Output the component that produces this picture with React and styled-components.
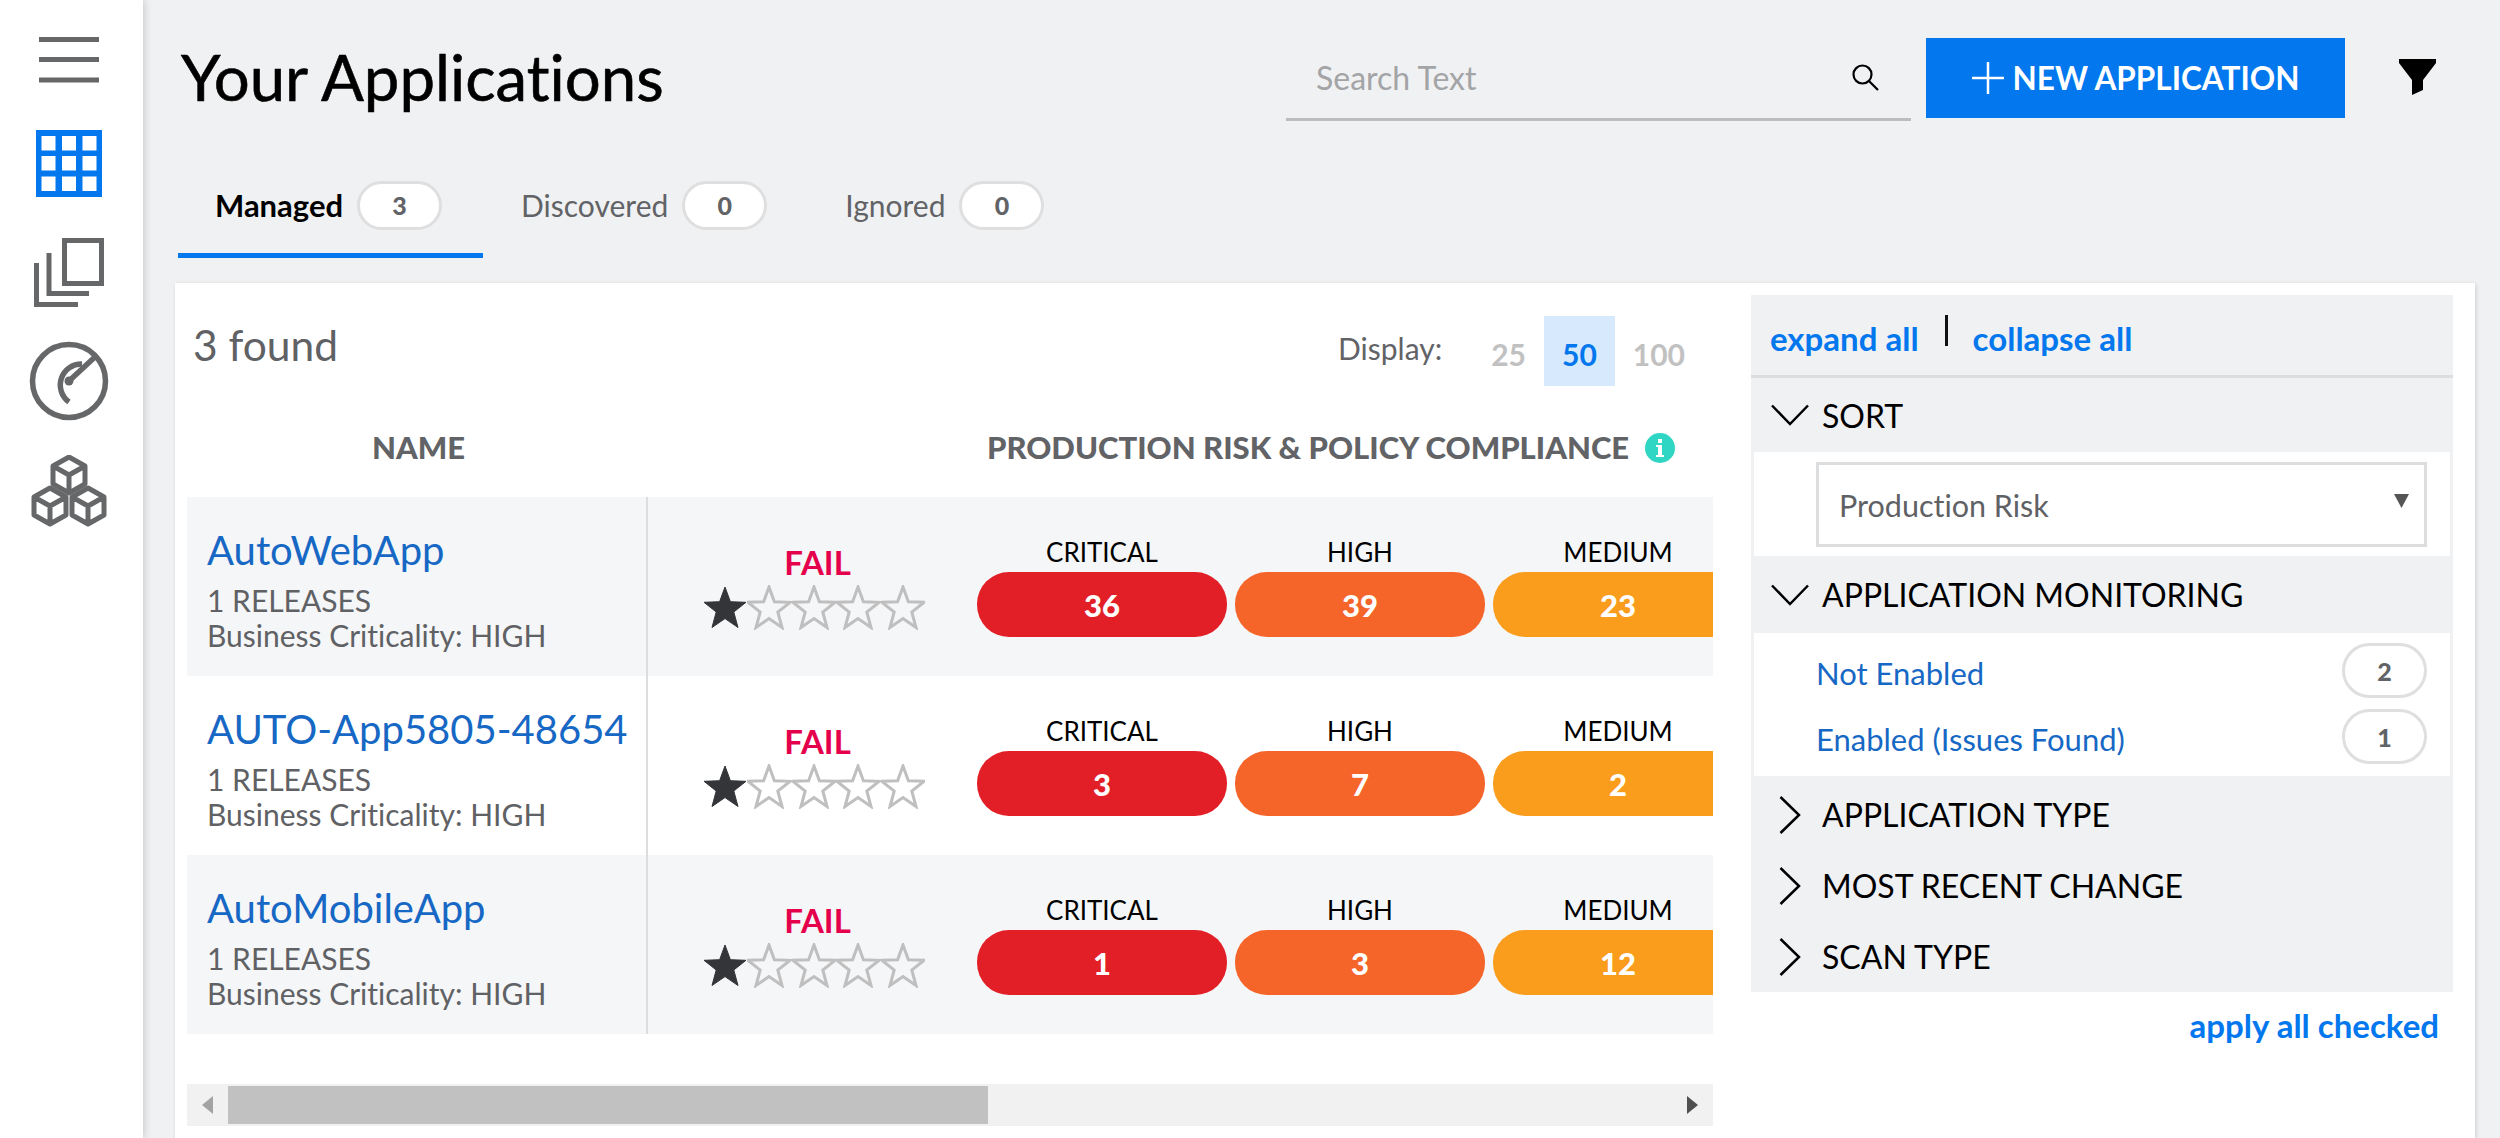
import React from 'react';
import styled, { createGlobalStyle } from 'styled-components';

const Global = createGlobalStyle`
  html, body { margin: 0; padding: 0; height: 1138px; overflow: hidden; background: #f0f1f3; }
  body { font-family: Lato, "Noto Sans", sans-serif; color: #000; font-variant-ligatures: none; }
  * { box-sizing: border-box; }
`;

const Page = styled.div`display: flex; width: 2500px; height: 1138px; overflow: hidden;`;
const Sidebar = styled.nav`
  width: 143px; flex: none; background: #fff; display: flex; flex-direction: column; align-items: center;
  padding: 37px 6px 0 0; box-shadow: 0 0 9px rgba(0,0,0,.22); position: relative; z-index: 1;
`;
const NavIcon = styled.svg`display: block; flex: none; margin-top: ${p => p.$top || 0}px;`;
const Main = styled.main`flex: 1; min-width: 0; display: flex; flex-direction: column; padding-left: 32px; padding-top: 38px;`;

const Header = styled.header`display: flex; align-items: flex-start; height: 80px; padding-left: 6px;`;
const Title = styled.h1`margin: 0; width: 1105px; flex: none; font-size: 63.5px; line-height: 78px; font-weight: 400; color: #000; -webkit-text-stroke: 0.6px #000;`;
const Search = styled.div`
  width: 625px; height: 83px; flex: none; border-bottom: 3px solid #bdbdbf; display: flex; align-items: center;
  justify-content: space-between; padding: 0 32px 2px 30px; font-size: 32px; color: #a3a4a6;
`;
const NewButton = styled.button`
  width: 419px; height: 80px; flex: none; margin-left: 15px; border: 0; background: #0277ee; color: #fff;
  display: flex; align-items: center; justify-content: center; gap: 9px; font: 700 31.5px Lato, sans-serif; padding: 0;
`;
const FilterIcon = styled.svg`display: block; flex: none; margin: 21px 0 0 54px;`;

const Tabs = styled.div`display: flex; height: 165px; margin-left: 3px; padding-top: 47px;`;
const Tab = styled.div`
  height: 93px; display: flex; align-items: center; gap: 14px;
  padding: 0 ${p => p.$active ? 41 : 40}px 8px ${p => p.$active ? 37 : 38}px;
  border-bottom: 5px solid ${p => p.$active ? '#0277ee' : 'transparent'};
  font-size: ${p => p.$active ? 31 : 30}px; font-weight: ${p => p.$active ? 700 : 400}; color: ${p => p.$active ? '#000' : '#626366'};
`;
const Count = styled.span`
  width: 85px; height: ${p => p.$h || 49}px; flex: none; border: 3px solid #dfdfe0; border-radius: 28px; background: #fff;
  display: flex; align-items: center; justify-content: center; font-size: 25px; font-weight: 900; color: #626366;
`;

const Card = styled.section`width: 2300px; flex: 1; background: #fff; display: flex; box-shadow: 1px 1px 4px rgba(0,0,0,.15);`;
const Results = styled.div`width: 1576px; flex: none; padding: 33px 38px 0 12px;`;
const TopRow = styled.div`height: 70px; display: flex; align-items: flex-start; justify-content: space-between;`;
const Found = styled.div`font-size: 42.5px; line-height: 58px; color: #606164; padding-left: 6px;`;
const Display = styled.div`display: flex; align-items: center; height: 70px; margin-right: 10px; font-size: 30px; color: #626366;`;
const DisplayLabel = styled.span`margin-right: 31px; margin-top: -6px;`;
const PageSize = styled.span`
  height: 70px; padding: 0 18px; display: flex; align-items: center; font-weight: 700; font-size: 30px; padding-top: 6px;
  color: ${p => p.$active ? '#0277ee' : '#c1c1c1'}; background: ${p => p.$active ? '#d6e9fd' : 'transparent'};
`;
const HeadRow = styled.div`height: 111px; padding-top: 11px; display: flex; align-items: center; font-weight: 900; font-size: 31px; color: #626366;`;
const NameHead = styled.div`width: 800px; flex: none; padding-left: 185px;`;
const InfoIcon = styled.svg`display: block; flex: none; margin-left: 16px; margin-top: 2px;`;

const Row = styled.div`height: 179px; display: flex; overflow: hidden; background: ${p => p.$odd ? '#f5f6f8' : '#fff'};`;
const NameCell = styled.div`width: 461px; flex: none; border-right: 2px solid #dcdddf; padding: 30px 0 0 20px; color: #606164;`;
const AppName = styled.a`display: block; font-size: 40px; line-height: 46px; color: #1668c4; white-space: nowrap;`;
const Meta = styled.div`font-size: 30px; line-height: 35px; white-space: nowrap; &:first-of-type { margin-top: 10px; }`;
const Rating = styled.div`width: 222px; flex: none; margin: 0 52px 0 55px; padding-top: 50px; display: flex; flex-direction: column; align-items: center;`;
const Fail = styled.div`font-size: 33px; line-height: 30px; font-weight: 700; color: #e5004c; padding-left: 7px;`;
const Stars = styled.div`display: flex; height: 45px; margin-top: 8px;`;
const Severities = styled.div`display: flex; gap: 8px; padding-top: 40px;`;
const Severity = styled.div`width: 250px; flex: none; display: flex; flex-direction: column; align-items: center;`;
const SevLabel = styled.div`font-size: 26px; line-height: 30px; height: 35px; color: #000;`;
const SevPill = styled.div`
  width: 250px; height: 65px; border-radius: 32px; background: ${p => p.$color}; color: #fff;
  display: flex; align-items: center; justify-content: center; font-size: 31px; font-weight: 900;
`;

const ScrollTrack = styled.div`height: 42px; margin-top: 50px; background: #f1f1f1; display: flex; align-items: center; padding: 0 15px;`;
const ScrollThumb = styled.div`width: 760px; height: 38px; background: #c1c1c1; margin-left: 15px; flex: none;`;
const ScrollArrow = styled.svg`display: block; flex: none; margin-left: ${p => p.$auto ? 'auto' : 0};`;

const Filters = styled.aside`width: 702px; flex: none; padding-top: 12px;`;
const Panel = styled.div`background: #f0f1f3; height: 697px;`;
const BulkRow = styled.div`height: 83px; border-bottom: 3px solid #dcdddf; display: flex; align-items: center; padding: 5px 0 0 19px; font-size: 33px; font-weight: 700; color: #0277ee;`;
const BulkBar = styled.span`width: 3px; height: 31px; background: #111; margin: -15px 25px 0 26px;`;
const Group = styled.div`
  height: ${p => p.$h}px; display: flex; align-items: center; font-size: 32px; color: #000;
  padding-left: 71px; position: relative;
`;
const Chevron = styled.svg`position: absolute; left: ${p => p.$left}px; top: 50%; transform: translateY(-50%);`;
const Inset = styled.div`background: #fff; margin: 0 3px; height: ${p => p.$h}px; padding: 10px 23px 0 62px;`;
const Select = styled.div`
  height: 85px; border: 3px solid #dcdddf; display: flex; align-items: center; justify-content: space-between;
  padding: 0 15px 0 20px; font-size: 30.5px; color: #606164;
`;
const Caret = styled.svg`display: block; margin-top: -8px;`;
const Option = styled.div`height: 55px; display: flex; align-items: center; justify-content: space-between; margin-bottom: 11px; font-size: 31px; color: #1668c4;`;
const OptionLabel = styled.span`padding-top: 4px;`;
const Spacer = styled.div`height: 3px;`;
const Apply = styled.div`text-align: right; padding-right: 14px; margin-top: 12px; font-size: 33px; line-height: 42px; font-weight: 700; color: #0277ee;`;

const Cube = ({ cx, cy }) => (
  <path d={`M${cx} ${cy - 18}L${cx + 16} ${cy - 9}V${cy + 9}L${cx} ${cy + 18}L${cx - 16} ${cy + 9}V${cy - 9}ZM${cx - 16} ${cy - 9}L${cx} ${cy}L${cx + 16} ${cy - 9}M${cx} ${cy}V${cy + 18}`} />
);
const Star = ({ filled }) => (
  <svg width="44.5" height="45" viewBox="0 0 44.5 45">
    <path d="M22 2 L27.4 16.7 L43 17.3 L30.8 27 L35 42.5 L22 33.6 L9 42.5 L13.2 27 L1 17.3 L16.6 16.7 Z"
      fill={filled ? '#333538' : 'none'} stroke={filled ? '#333538' : '#bfbfbf'} strokeWidth={filled ? 1 : 3} />
  </svg>
);
const ChevronDown = () => <Chevron $left={20} width="38" height="22" viewBox="0 0 38 22"><path d="M1 1.5 19 20 37 1.5" fill="none" stroke="#000" strokeWidth="2.5" /></Chevron>;
const ChevronRight = () => <Chevron $left={28} width="22" height="38" viewBox="0 0 22 38"><path d="M1.5 1 20 19 1.5 37" fill="none" stroke="#000" strokeWidth="2.5" /></Chevron>;

const apps = [
  { name: 'AutoWebApp', v: [36, 39, 23] },
  { name: 'AUTO-App5805-48654', v: [3, 7, 2] },
  { name: 'AutoMobileApp', v: [1, 3, 12] },
];
const sevs = [['CRITICAL', '#e21f27'], ['HIGH', '#f56428'], ['MEDIUM', '#fa9c1c']];

export default function App() {
  return (
    <Page>
      <Global />
      <Sidebar>
        <NavIcon width="60" height="46" viewBox="0 0 60 46">
          <path d="M0 2.5H60M0 22.5H60M0 43H60" stroke="#666769" strokeWidth="5" />
        </NavIcon>
        <NavIcon $top={47} width="66" height="67" viewBox="0 0 66 67">
          <rect width="66" height="67" fill="#0277ee" />
          {[5.5, 26, 46.5].map(x => [6, 26, 46.5].map(y => <rect key={`${x}-${y}`} x={x} y={y} width="14" height="14.5" fill="#fff" />))}
        </NavIcon>
        <NavIcon $top={41} width="70" height="69" viewBox="0 0 70 69" fill="none" stroke="#666769" strokeWidth="5">
          <rect x="30.5" y="2.5" width="37" height="43" />
          <path d="M15 15V55.5H55" />
          <path d="M2.5 25V66.5H44" />
        </NavIcon>
        <NavIcon $top={34} width="80" height="80" viewBox="0 0 80 80" fill="none" stroke="#666769" strokeWidth="5.5">
          <circle cx="40" cy="40" r="36.5" />
          <path d="M40 61A21 21 0 0 1 53 23" />
          <path d="M40 40L67 15" />
          <circle cx="40" cy="40" r="4.5" fill="#666769" stroke="none" />
        </NavIcon>
        <NavIcon $top={34} width="76" height="72" viewBox="0 0 76 72" fill="none" stroke="#666769" strokeWidth="5" strokeLinejoin="round">
          <Cube cx={38} cy={20} /><Cube cx={19} cy={51} /><Cube cx={57} cy={51} />
        </NavIcon>
      </Sidebar>
      <Main>
        <Header>
          <Title>Your Applications</Title>
          <Search>
            <span>Search Text</span>
            <svg width="28" height="28" viewBox="0 0 28 28" fill="none" stroke="#000" strokeWidth="2.2"><circle cx="11.5" cy="11.5" r="9" /><path d="M18 18 27 27" /></svg>
          </Search>
          <NewButton>
            <svg width="32" height="32" viewBox="0 0 32 32" stroke="#fff" strokeWidth="2.5"><path d="M16 0V32M0 16H32" /></svg>
            NEW APPLICATION
          </NewButton>
          <FilterIcon width="37" height="36" viewBox="0 0 37 36"><path d="M0 0H37V4L24 21V31L13 36V21L0 4Z" fill="#000" /></FilterIcon>
        </Header>
        <Tabs>
          <Tab $active>Managed<Count>3</Count></Tab>
          <Tab>Discovered<Count>0</Count></Tab>
          <Tab>Ignored<Count>0</Count></Tab>
        </Tabs>
        <Card>
          <Results>
            <TopRow>
              <Found>3 found</Found>
              <Display>
                <DisplayLabel>Display:</DisplayLabel>
                <PageSize>25</PageSize>
                <PageSize $active>50</PageSize>
                <PageSize>100</PageSize>
              </Display>
            </TopRow>
            <HeadRow>
              <NameHead>NAME</NameHead>
              PRODUCTION RISK &amp; POLICY COMPLIANCE
              <InfoIcon width="30" height="30" viewBox="0 0 30 30">
                <circle cx="15" cy="15" r="15" fill="#2fd6c3" />
                <path d="M13 6h4v4h-4zM11 12h6v10h2v2h-8v-2h2v-8h-2z" fill="#fff" />
              </InfoIcon>
            </HeadRow>
            {apps.map((a, i) => (
              <Row key={a.name} $odd={i % 2 === 0}>
                <NameCell>
                  <AppName>{a.name}</AppName>
                  <Meta>1 RELEASES</Meta>
                  <Meta>Business Criticality: HIGH</Meta>
                </NameCell>
                <Rating>
                  <Fail>FAIL</Fail>
                  <Stars>{[0, 1, 2, 3, 4].map(s => <Star key={s} filled={s === 0} />)}</Stars>
                </Rating>
                <Severities>
                  {sevs.map(([label, color], j) => (
                    <Severity key={label}>
                      <SevLabel>{label}</SevLabel>
                      <SevPill $color={color}>{a.v[j]}</SevPill>
                    </Severity>
                  ))}
                </Severities>
              </Row>
            ))}
            <ScrollTrack>
              <ScrollArrow width="11" height="18" viewBox="0 0 11 18"><path d="M11 0V18L0 9Z" fill="#a3a3a3" /></ScrollArrow>
              <ScrollThumb />
              <ScrollArrow $auto width="11" height="18" viewBox="0 0 11 18"><path d="M0 0V18L11 9Z" fill="#505050" /></ScrollArrow>
            </ScrollTrack>
          </Results>
          <Filters>
            <Panel>
              <BulkRow>expand all<BulkBar />collapse all</BulkRow>
              <Group $h={74}><ChevronDown />SORT</Group>
              <Inset $h={104}>
                <Select>
                  Production Risk
                  <Caret width="15" height="14" viewBox="0 0 15 14"><path d="M0 0H15L7.5 14Z" fill="#555" /></Caret>
                </Select>
              </Inset>
              <Group $h={77}><ChevronDown />APPLICATION MONITORING</Group>
              <Inset $h={143}>
                <Option><OptionLabel>Not Enabled</OptionLabel><Count $h={55}>2</Count></Option>
                <Option><OptionLabel>Enabled (Issues Found)</OptionLabel><Count $h={55}>1</Count></Option>
              </Inset>
              <Spacer />
              <Group $h={71}><ChevronRight />APPLICATION TYPE</Group>
              <Group $h={71}><ChevronRight />MOST RECENT CHANGE</Group>
              <Group $h={71}><ChevronRight />SCAN TYPE</Group>
            </Panel>
            <Apply>apply all checked</Apply>
          </Filters>
        </Card>
      </Main>
    </Page>
  );
}
